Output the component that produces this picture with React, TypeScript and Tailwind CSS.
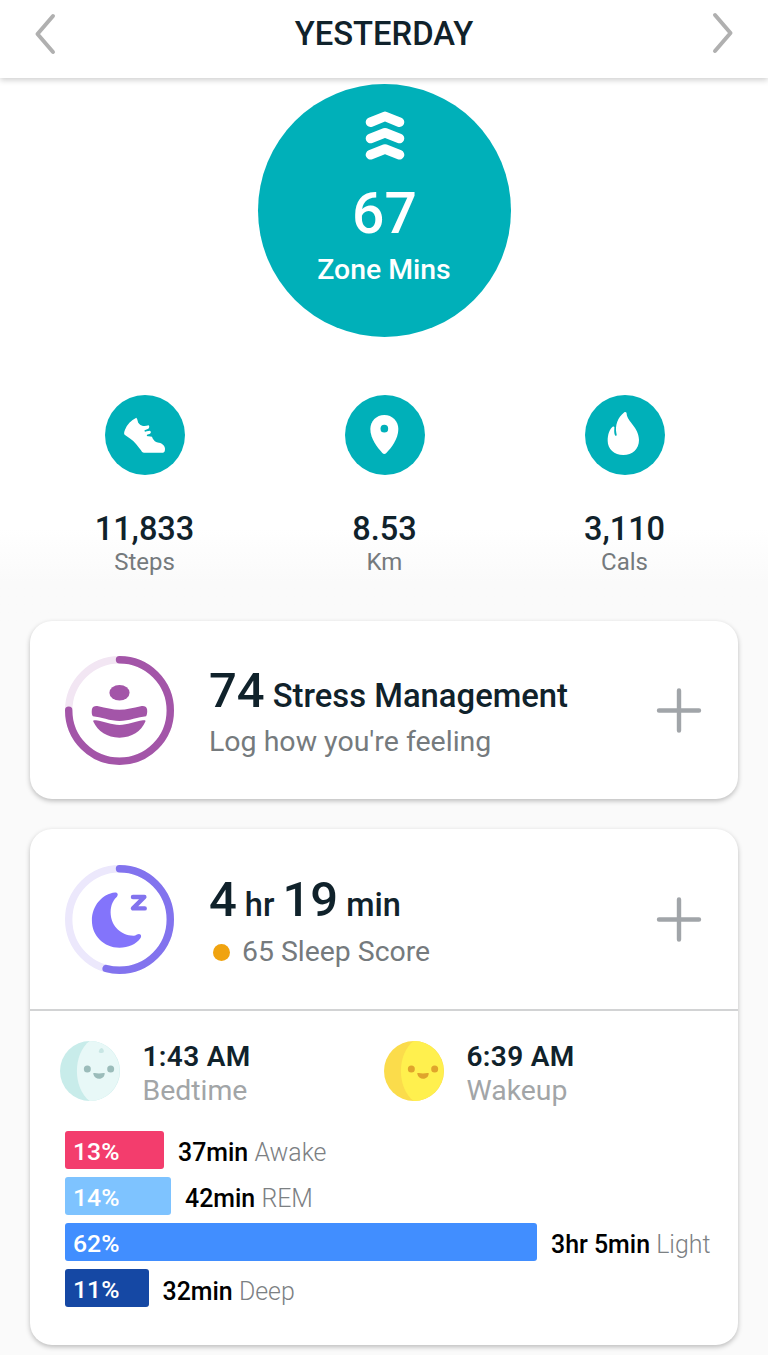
import type { ReactNode } from 'react';

type StatProps = {
  icon: ReactNode;
  value: string;
  label: string;
};

type RingProps = {
  progress: number;
  color: string;
  track: string;
  children: ReactNode;
};

type FaceProps = {
  shade: string;
  base: string;
  feature: string;
  crater?: string;
};

const stages = [
  { name: 'Awake', percent: 13, time: '37min', width: 99, color: 'bg-[#f33d6d]' },
  { name: 'REM', percent: 14, time: '42min', width: 106, color: 'bg-[#7ec3ff]' },
  { name: 'Light', percent: 62, time: '3hr 5min', width: 472, color: 'bg-[#418eff]' },
  { name: 'Deep', percent: 11, time: '32min', width: 83.5, color: 'bg-[#1548a4]' },
];

const ShoeIcon = () => (
  <svg viewBox="0 0 240 240" className="h-20 w-20" fill="#fff">
    <path d="M94 68 C99 74 97 82 103 87 C110 94 119 95 131 91 C134 93 133 99 130 101 L119 106 C117 110 121 111 125 109 L135 107 C139 109 138 114 135 116 L126 119 C124 122 127 124 131 124 L141 125 C145 137 153 142 162 143 C172 145 180 152 180 161 C180 168 179 171 174 173 L117 173 C113 173 110 170 108 166 C99 153 88 139 76 131 L60 120 C56 117 57 111 60 104 C66 88 78 76 94 68 Z" />
  </svg>
);

const PinIcon = () => (
  <svg viewBox="0 0 240 240" className="h-20 w-20">
    <path
      fill="#fff"
      d="M118 60 C94 60 76 79 76 102 C76 132 98 158 112 174 C116 178 120 178 124 174 C139 158 160 132 160 102 C160 79 142 60 118 60 Z"
    />
    <circle cx="118" cy="101" r="11.5" fill="#00b0b9" />
  </svg>
);

const FlameIcon = () => (
  <svg viewBox="0 0 240 240" className="h-20 w-20" fill="#fff">
    <path d="M118 52 C122 50 125 52 125 57 C127 80 162 98 162 135 C162 163 142 180 115 180 C88 180 68 162 68 137 C68 118 74 101 83 95 C87 93 89 95 88 100 C87 112 88 119 91 122 C95 124 96 120 94 114 C90 94 97 68 118 52 Z" />
  </svg>
);

const Stat = ({ icon, value, label }: StatProps) => (
  <div className="flex w-60 flex-col items-center">
    <div className="h-20 w-20 rounded-full bg-[#00b0b9]">{icon}</div>
    <div className="mt-[34px] text-[32.5px] leading-[41px] font-medium">{value}</div>
    <div className="-mt-px text-2xl leading-[26px] text-[#757a7d]">{label}</div>
  </div>
);

const Ring = ({ progress, color, track, children }: RingProps) => (
  <svg viewBox="0 0 324 324" className="h-[109px] w-[109px] shrink-0">
    <circle cx="162" cy="162" r="151" fill="none" stroke={track} strokeWidth="22" />
    <circle
      cx="162"
      cy="162"
      r="151"
      fill="none"
      stroke={color}
      strokeWidth="22"
      strokeLinecap="round"
      pathLength="100"
      strokeDasharray={`${progress} 100`}
      transform="rotate(-90 162 162)"
    />
    {children}
  </svg>
);

const Face = ({ shade, base, feature, crater }: FaceProps) => (
  <svg viewBox="0 0 180 180" className="mt-0.5 h-[60px] w-[60px] shrink-0">
    <circle cx="90" cy="90" r="90" fill={shade} />
    <path d="M89 0 A90 90 0 0 1 89 180 C38 142 38 38 89 0 Z" fill={base} />
    {crater && <path d="M124 21 C130 22 133 29 131 34 C128 37 119 37 116 33 C117 28 119 23 124 21 Z" fill={crater} />}
    <circle cx="82" cy="84" r="10.5" fill={feature} />
    <circle cx="152" cy="84" r="10.5" fill={feature} />
    <path d="M100 99 C99 96 101 95 104 96 C112 98 122 98 130 96 C133 95 135 96 134 99 C132 118 103 118 100 99 Z" fill={feature} />
  </svg>
);

const Plus = () => (
  <svg viewBox="0 0 46 46" className="mr-9 ml-auto h-[46px] w-[46px] shrink-0">
    <path d="M23 3.5 V43.5 M3 23.5 H43" stroke="#a1a5a9" strokeWidth="4.4" strokeLinecap="round" />
  </svg>
);

export default function App() {
  return (
    <div className="flex h-[1355px] w-[768px] flex-col overflow-hidden bg-[#fafafa] font-['Roboto',sans-serif] text-[#10222b]">
      <header className="z-10 flex h-[78px] shrink-0 items-center justify-between bg-white px-[33px] pb-[9px] shadow-[0_2px_6px_rgba(0,0,0,0.2)]">
        <svg viewBox="0 0 24 42" className="mb-0.5 h-[42px] w-6">
          <path d="M20 3 L4.5 21 L20 39" fill="none" stroke="#b0b0b0" strokeWidth="4" strokeLinecap="round" strokeLinejoin="round" />
        </svg>
        <h1 className="text-[32.8px] font-medium">YESTERDAY</h1>
        <svg viewBox="0 0 24 42" className="mb-[3px] h-[42px] w-6">
          <path d="M4 3 L19.5 21 L4 39" fill="none" stroke="#b0b0b0" strokeWidth="4" strokeLinecap="round" strokeLinejoin="round" />
        </svg>
      </header>

      <section className="flex h-[543px] shrink-0 flex-col items-center bg-linear-to-b from-white from-83% to-[#fafafa] to-93% pt-1.5">
        <div className="flex h-[253px] w-[253px] flex-col items-center rounded-full bg-[#00b0b9] pt-[25px] text-white">
          <svg viewBox="0 0 42 52" className="ml-px h-[52px] w-[42px]">
            <g fill="none" stroke="#fff" strokeWidth="9.6" strokeLinecap="round" strokeLinejoin="round">
              <path d="M6.5 13.2 L21 7.4 L35.5 13.2" />
              <path d="M6.5 29.5 L21 23.7 L35.5 29.5" />
              <path d="M6.5 45.8 L21 40 L35.5 45.8" />
            </g>
          </svg>
          <div className="mt-[21px] ml-px text-[57px] leading-[64px] font-medium">67</div>
          <div className="mt-1.5 text-[28.4px] leading-9 font-medium">Zone Mins</div>
        </div>
        <div className="mt-[58px] ml-px flex w-[720px]">
          <Stat icon={<ShoeIcon />} value="11,833" label="Steps" />
          <Stat icon={<PinIcon />} value="8.53" label="Km" />
          <Stat icon={<FlameIcon />} value="3,110" label="Cals" />
        </div>
      </section>

      <main className="flex flex-col gap-[30px] px-[30px]">
        <section className="flex h-[178px] items-center rounded-[22px] bg-white pl-[35px] shadow-[0_2px_5px_rgba(0,0,0,0.25)]">
          <Ring progress={75} color="#a355a8" track="#f2e6f3">
            <g fill="#a355a8">
              <ellipse cx="162" cy="109" rx="30" ry="23" />
              <path d="M80 158 C82 149 90 147 99 149 C121 153 141 160 162 160 C183 160 203 153 225 149 C234 147 242 149 244 158 C245 167 244 174 241 179 C218 181 190 193 162 193 C134 193 106 181 83 179 C79 174 79 167 80 158 Z" />
              <path d="M84 195 C83 191 86 190 92 191 C117 194 138 205 162 205 C186 205 207 194 232 191 C238 190 240 191 239 195 C226 224 199 243 162 243 C125 243 98 224 84 195 Z" />
            </g>
          </Ring>
          <div className="ml-[35px]">
            <h2 className="text-[49px] leading-[62px] font-medium whitespace-nowrap">
              74<span className="ml-2 text-[32.8px] leading-none">Stress Management</span>
            </h2>
            <p className="mt-0.5 text-[28.5px] leading-9 text-[#757a7d]">Log how you're feeling</p>
          </div>
          <Plus />
        </section>

        <section className="h-[516px] rounded-[22px] bg-white shadow-[0_2px_5px_rgba(0,0,0,0.25)]">
          <div className="flex h-[182px] items-center border-b-2 border-[#d2d3d4] pl-[35px]">
            <Ring progress={54.2} color="#8273ee" track="#ece8fc">
              <path
                fill="#8374fb"
                d="M149 82 C158 82 159 90 153 96 C140 108 134 127 136 148 C139 183 168 211 205 210 C210 210 215 205 220 205 C227 206 228 212 224 218 C211 236 188 246 162 246 C115 246 80 210 80 165 C80 121 111 86 149 82 Z"
              />
              <path
                d="M202 95 H236 L202 129 H237"
                fill="none"
                stroke="#8273ee"
                strokeWidth="13"
                strokeLinecap="round"
                strokeLinejoin="round"
              />
            </Ring>
            <div className="ml-[35px]">
              <h2 className="text-[49px] leading-[62px] font-medium whitespace-nowrap">
                4<span className="mx-2 text-[32.5px] leading-none">hr</span>
                19<span className="ml-2 text-[32.5px] leading-none">min</span>
              </h2>
              <p className="mt-[3px] flex items-center text-[28.4px] leading-9 text-[#757a7d]">
                <span className="mt-px mr-3 ml-1 h-[17px] w-[17px] rounded-full bg-[#f0a30f]" />
                65 Sleep Score
              </p>
            </div>
            <Plus />
          </div>

          <div className="flex pt-7 pl-[30px]">
            <div className="flex w-[324px]">
              <Face shade="#c8ecea" base="#e8f8f7" feature="#9bbcba" crater="#c8e6e4" />
              <div className="ml-[22.5px]">
                <div className="text-[28px] leading-[35px] font-semibold tracking-[0.35px]">1:43 AM</div>
                <div className="text-[28.4px] leading-[34px] text-[#a2a5a7]">Bedtime</div>
              </div>
            </div>
            <div className="flex">
              <Face shade="#fbdc4b" base="#fff04e" feature="#e0a42c" />
              <div className="ml-[22.5px]">
                <div className="text-[28px] leading-[35px] font-semibold tracking-[0.35px]">6:39 AM</div>
                <div className="text-[28.4px] leading-[34px] text-[#a2a5a7]">Wakeup</div>
              </div>
            </div>
          </div>

          <div className="mt-[22.5px] flex flex-col gap-2 pl-[35px]">
            {stages.map((stage) => (
              <div key={stage.name} className="flex h-[38.2px] items-center whitespace-nowrap">
                <div
                  className={`flex h-full items-center rounded-[3px] pt-[3px] pl-2 text-[24.8px] font-medium text-white ${stage.color}`}
                  style={{ width: stage.width }}
                >
                  {stage.percent}%
                </div>
                <div className="ml-3.5 pt-[7px] text-[24.9px] leading-8 font-medium text-black">
                  {stage.time} <span className="font-light text-[#7c8083]">{stage.name}</span>
                </div>
              </div>
            ))}
          </div>
        </section>
      </main>
    </div>
  );
}
